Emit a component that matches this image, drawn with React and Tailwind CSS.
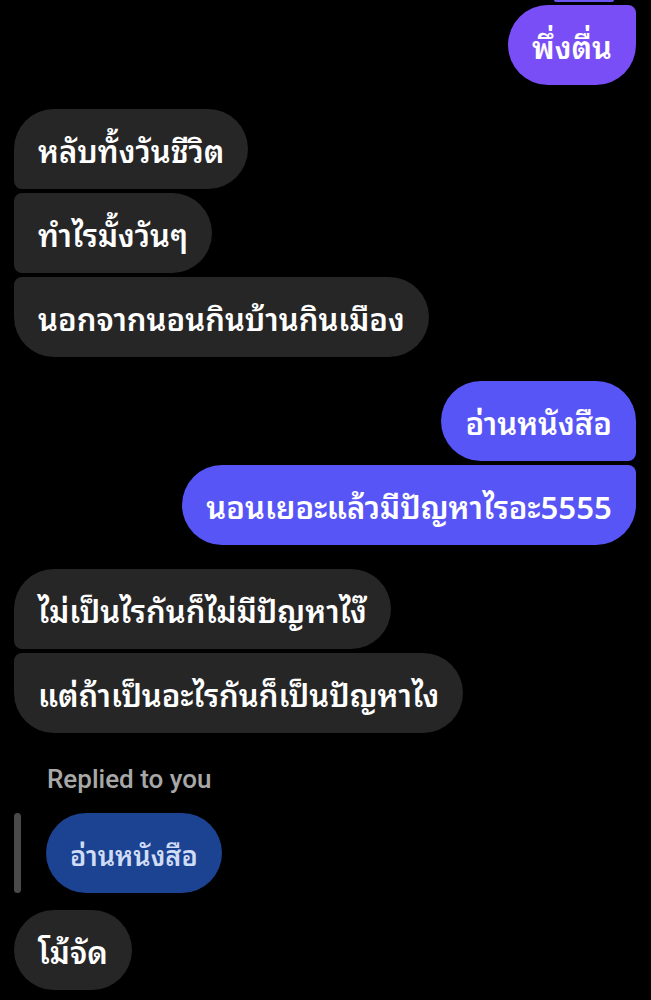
import React from "react";

const thai = { fontFamily: '"Noto Sans Thai Looped", "Noto Sans Thai", "Noto Sans", Roboto, sans-serif' };

function Bubble({ text, side = "left", tone = "grey", corners = "" }) {
  const tones = {
    grey: "bg-[#262626] text-white",
    purple: "bg-[#7a4ef6] text-white",
    blue: "bg-[#5755f6] text-white",
  };
  return (
    <div className={side === "right" ? "flex justify-end" : "flex justify-start"}>
      <div
        className={`h-[80px] flex items-center px-[24px] rounded-[40px] text-[31px] font-semibold leading-none ${tones[tone]} ${corners}`}
        style={thai}
      >
        {text}
      </div>
    </div>
  );
}

export default function App() {
  return (
    <div className="min-h-[1000px] bg-black pl-[14px] pr-[15px] overflow-hidden">
      {/* tail of the previous outgoing message */}
      <div className="flex justify-end pr-[22px]">
        <div className="h-[2px] w-[60px] bg-[#6b56f3] rounded-b-full" />
      </div>

      <div className="mt-[3px]">
        <Bubble text="พึ่งตื่น" side="right" tone="purple" corners="rounded-tr-[8px]" />
      </div>

      <div className="mt-[24px] flex flex-col gap-[4px]">
        <Bubble text="หลับทั้งวันชีวิต" corners="rounded-bl-[8px]" />
        <Bubble text="ทำไรมั้งวันๆ" corners="rounded-l-[8px]" />
        <Bubble text="นอกจากนอนกินบ้านกินเมือง" corners="rounded-tl-[8px]" />
      </div>

      <div className="mt-[24px] flex flex-col gap-[4px]">
        <Bubble text="อ่านหนังสือ" side="right" tone="blue" corners="rounded-br-[8px]" />
        <Bubble text="นอนเยอะแล้วมีปัญหาไรอะ5555" side="right" tone="blue" corners="rounded-tr-[8px]" />
      </div>

      <div className="mt-[24px] flex flex-col gap-[4px]">
        <Bubble text="ไม่เป็นไรกันก็ไม่มีปัญหาไง๊" corners="rounded-bl-[8px]" />
        <Bubble text="แต่ถ้าเป็นอะไรกันก็เป็นปัญหาไง" corners="rounded-tl-[8px]" />
      </div>

      <div
        className="mt-[30px] pl-[33px] text-[26px] leading-[32px] font-medium text-[#a8a8a8]"
        style={{ fontFamily: "Roboto, Inter, sans-serif" }}
      >
        Replied to you
      </div>

      <div className="mt-[18px] flex items-stretch gap-[25px]">
        <div className="w-[7px] rounded-full bg-[#4a4a4a]" />
        <div
          className="h-[80px] flex items-center px-[24px] rounded-[40px] bg-[#1b4391] text-[#d0dcf5] text-[27px] font-semibold leading-none"
          style={thai}
        >
          อ่านหนังสือ
        </div>
      </div>

      <div className="mt-[17px]">
        <Bubble text="โม้จัด" corners="rounded-tl-[40px]" />
      </div>
    </div>
  );
}
